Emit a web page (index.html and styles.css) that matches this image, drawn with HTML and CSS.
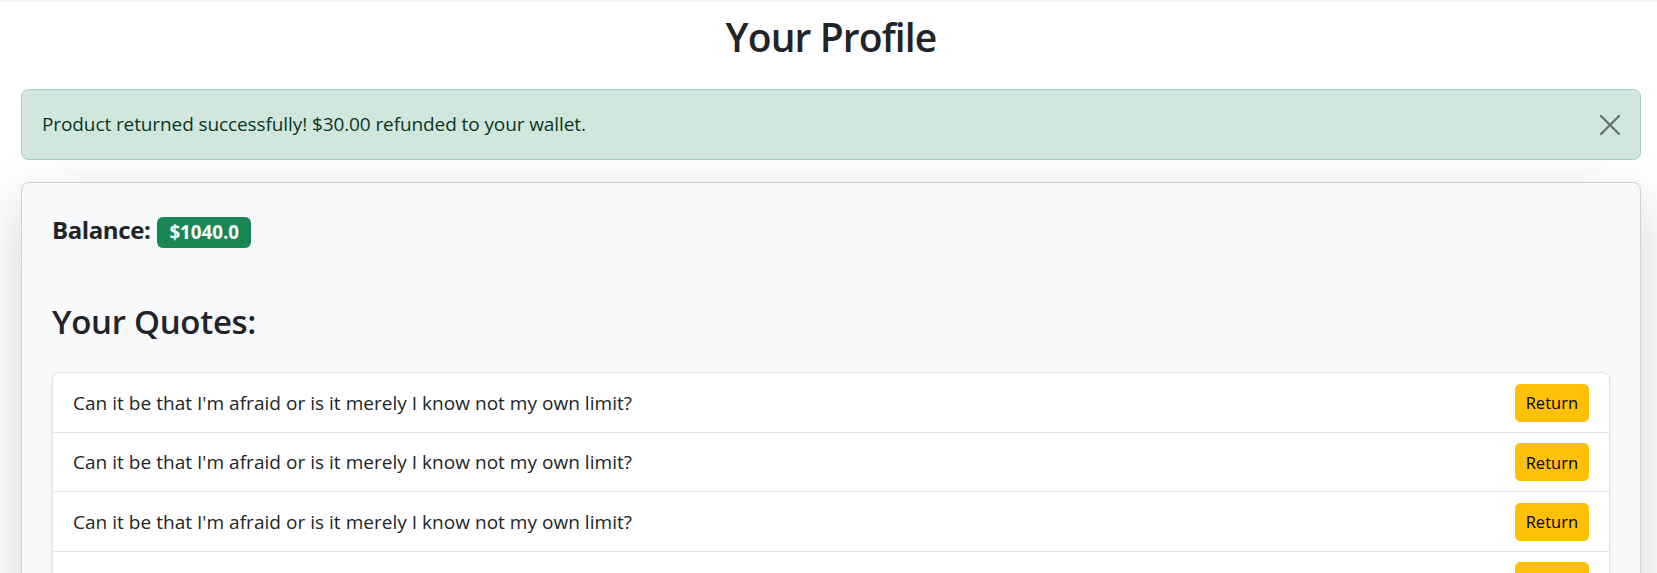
FILE: index.html
```html
<!DOCTYPE html>
<html lang="en">
<head>
<meta charset="utf-8">
<title>Your Profile</title>
<link rel="stylesheet" href="styles.css">
</head>
<body>
<div class="topbar"></div>
<main class="page">
  <h1 class="title">Your Profile</h1>
  <div class="alert">
    <span class="alert-text">Product returned successfully! $30.00 refunded to your wallet.</span>
    <button class="close" aria-label="Close">
      <svg width="20" height="20" viewBox="0 0 20 20"><path d="M1 1 L19 19 M19 1 L1 19" stroke="currentColor" stroke-width="2.4" stroke-linecap="round"/></svg>
    </button>
  </div>
  <section class="card">
    <h5 class="balance"><span class="balance-label">Balance:</span><span class="badge">$1040.0</span></h5>
    <h4 class="quotes-title">Your Quotes:</h4>
    <ul class="list">
      <li class="item"><span class="quote">Can it be that I'm afraid or is it merely I know not my own limit?</span><button class="btn-return">Return</button></li>
      <li class="item"><span class="quote">Can it be that I'm afraid or is it merely I know not my own limit?</span><button class="btn-return">Return</button></li>
      <li class="item"><span class="quote">Can it be that I'm afraid or is it merely I know not my own limit?</span><button class="btn-return">Return</button></li>
      <li class="item"><span class="quote">Can it be that I'm afraid or is it merely I know not my own limit?</span><button class="btn-return">Return</button></li>
      <li class="item"><span class="quote">Can it be that I'm afraid or is it merely I know not my own limit?</span><button class="btn-return">Return</button></li>
    </ul>
  </section>
</main>
</body>
</html>
```
FILE: styles.css
```css
html {
  overflow: hidden;
}
body {
  margin: 0;
  font-family: "Open Sans", "Noto Sans", sans-serif;
  color: #212529;
  background: #fff;
}
.topbar {
  height: 2px;
  background: #f3f3f3;
}
.page {
  padding: 0 16px 0 21px;
}
.title {
  margin: 10.5px 0 28.5px;
  font-size: 39px;
  line-height: 48px;
  font-weight: 600;
  letter-spacing: -0.9px;
  text-align: center;
}
.alert {
  display: flex;
  align-items: center;
  justify-content: space-between;
  padding: 20px;
  background: #d1e7dd;
  border: 1px solid #a3cfbb;
  border-radius: 7.5px;
  color: #0a3622;
  font-size: 19px;
  letter-spacing: -0.1px;
  line-height: 29px;
}
.close {
  display: flex;
  padding: 0;
  border: 0;
  background: none;
  color: #68746e;
  cursor: pointer;
}
.card {
  margin-top: 22px;
  padding: 30px;
  background: #f8f9fa;
  border: 1px solid #d0d1d2;
  border-radius: 8px;
  box-shadow: 0 20px 60px rgba(0, 0, 0, 0.175);
}
.balance {
  margin: 2px 0 0;
  font-size: 24px;
  line-height: 30px;
  font-weight: 700;
}
.balance-label {
  letter-spacing: -0.4px;
}
.badge {
  display: inline-block;
  margin-left: 7px;
  padding: 6.5px 12px;
  font-size: 18.75px;
  line-height: 1;
  font-weight: 700;
  color: #fff;
  background: #198754;
  border-radius: 6px;
}
.quotes-title {
  margin: 53.5px 0 30.5px;
  font-size: 33px;
  line-height: 40px;
  font-weight: 600;
  letter-spacing: -0.3px;
}
.list {
  margin: 0;
  padding: 0;
  list-style: none;
  background: #fff;
  border: 1px solid #dee2e6;
  border-radius: 7.5px;
  box-shadow: 0 2px 5px rgba(0, 0, 0, 0.075);
}
.item {
  display: flex;
  align-items: center;
  justify-content: space-between;
  padding: 10.25px 20px;
  border-bottom: 1px solid #dee2e6;
}
.item:last-child {
  border-bottom: 0;
}
.quote {
  font-size: 19px;
  letter-spacing: 0.03px;
  line-height: 30px;
}
.btn-return {
  height: 38px;
  padding: 0 10px;
  font-family: inherit;
  font-size: 16.5px;
  color: #000;
  background: #ffc107;
  border: 1px solid #ffc107;
  border-radius: 5px;
  cursor: pointer;
}
```
